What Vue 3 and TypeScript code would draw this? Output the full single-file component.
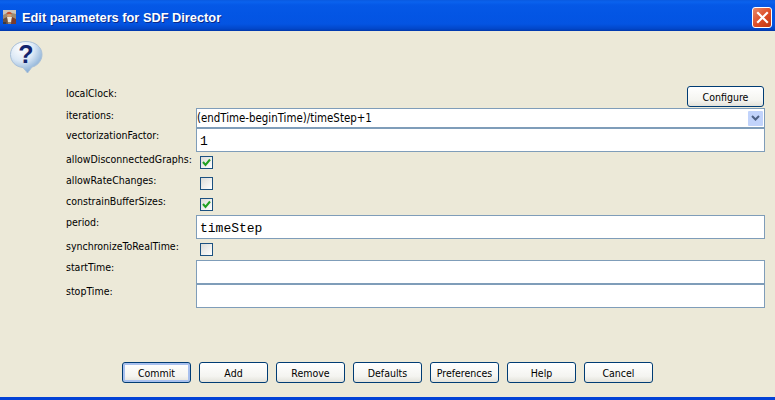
<template>
  <div class="dialog">
    <header class="titlebar">
      <svg class="titlebar__logo" width="13" height="14" viewBox="0 0 13 14">
        <rect width="13" height="14" fill="#a08a70" />
        <path d="M0 0 H13 V4 L9 3 L4 3 L0 5 Z" fill="#c9c4bc" />
        <path d="M3.5 4 C4 1 8 1 9 4 Z" fill="#c4502c" />
        <ellipse cx="6.3" cy="5.5" rx="2.3" ry="1.6" fill="#d8a070" />
        <path d="M4 7 L9 7 L8 12 L5 12 Z" fill="#eee8dc" />
        <path d="M0 9 L4 7 L5 14 L0 14 Z" fill="#6a5040" />
        <path d="M9 7 L13 9 L13 14 L8 14 Z" fill="#7a3c2c" />
        <rect x="0" y="12" width="3" height="2" fill="#3a3a46" />
      </svg>
      <span class="titlebar__text">Edit parameters for SDF Director</span>
      <button class="titlebar__close" aria-label="Close">
        <svg width="13" height="13" viewBox="0 0 13 13">
          <path d="M2 2 L11 11 M11 2 L2 11" stroke="#fff" stroke-width="2.2" stroke-linecap="square" fill="none" />
        </svg>
      </button>
    </header>

    <main class="body">
      <svg class="help-icon" width="33" height="33" viewBox="0 0 33 33">
        <defs>
          <radialGradient id="bubble" cx="35%" cy="22%" r="80%">
            <stop offset="0" stop-color="#ffffff" />
            <stop offset="0.5" stop-color="#dbe8f5" />
            <stop offset="1" stop-color="#7fa8d2" />
          </radialGradient>
        </defs>
        <path
          d="M16 0.5 C25 0.5 32 6 32 13.5 C32 20 27 25 22 26 L17.5 32 L13 26.5 C6 26 0.5 21 0.5 13.5 C0.5 6 7 0.5 16 0.5 Z"
          fill="url(#bubble)"
          stroke="#a9c0d8"
        />
        <text x="16" y="22" class="help-icon__mark">?</text>
      </svg>

      <div class="form">
        <div v-for="row in rows" :key="row.label" class="row" :class="`row--${row.kind}`">
          <label class="row__label">{{ row.label }}:</label>
          <div class="row__control">
            <button v-if="row.kind === 'button'" class="btn btn--configure">Configure</button>
            <div v-else-if="row.kind === 'combo'" class="combo">
              <span class="combo__text">{{ row.value }}</span>
              <span class="combo__arrow">
                <svg width="9" height="7" viewBox="0 0 9 7">
                  <path d="M1 1 L4.5 4.5 L8 1" stroke="#4d6185" stroke-width="2" fill="none" />
                </svg>
              </span>
            </div>
            <div v-else-if="row.kind === 'text'" class="field">{{ row.value }}</div>
            <span v-else class="checkbox">
              <svg v-if="row.checked" width="9" height="9" viewBox="0 0 9 9">
                <path d="M1 4 L3.5 7 L8 1.5" stroke="#21a121" stroke-width="2" fill="none" />
              </svg>
            </span>
          </div>
        </div>
      </div>

      <footer class="actions">
        <button
          v-for="name in actions"
          :key="name"
          class="btn"
          :class="{ 'btn--default': name === 'Commit' }"
        >{{ name }}</button>
      </footer>
    </main>
    <div class="taskbar-edge"></div>
  </div>
</template>

<script setup lang="ts">
interface Row {
  label: string
  kind: 'button' | 'combo' | 'text' | 'check'
  value?: string
  checked?: boolean
}

const rows: Row[] = [
  { label: 'localClock', kind: 'button' },
  { label: 'iterations', kind: 'combo', value: '(endTime-beginTime)/timeStep+1' },
  { label: 'vectorizationFactor', kind: 'text', value: '1' },
  { label: 'allowDisconnectedGraphs', kind: 'check', checked: true },
  { label: 'allowRateChanges', kind: 'check', checked: false },
  { label: 'constrainBufferSizes', kind: 'check', checked: true },
  { label: 'period', kind: 'text', value: 'timeStep' },
  { label: 'synchronizeToRealTime', kind: 'check', checked: false },
  { label: 'startTime', kind: 'text', value: '' },
  { label: 'stopTime', kind: 'text', value: '' },
]

const actions = ['Commit', 'Add', 'Remove', 'Defaults', 'Preferences', 'Help', 'Cancel']
</script>

<style>
body {
  overflow: hidden;
}
</style>

<style scoped>
.dialog {
  width: 775px;
  height: 400px;
  display: flex;
  flex-direction: column;
  background: #ece9d8;
  font-family: "DejaVu Sans", Tahoma, sans-serif;
  font-stretch: condensed;
  font-size: 10.5px;
  color: #000;
}

.titlebar {
  box-sizing: border-box;
  flex: 0 0 31px;
  display: flex;
  align-items: center;
  padding: 3px 3px 0;
  background: linear-gradient(#0a5ae0 0, #0a62ee 2px, #0558e6 5px, #0355e4 16px, #0454e2 24px, #0246c8 29px, #0036a8 31px);
}

.titlebar__logo {
  margin-right: 6px;
}

.titlebar__text {
  flex: 1;
  color: #fff;
  font-family: "Liberation Sans", Arial, sans-serif;
  font-stretch: normal;
  font-weight: 700;
  font-size: 12.8px;
  text-shadow: 1px 1px 0 #0a2a8a;
}

.titlebar__close {
  width: 20px;
  height: 21px;
  padding: 0;
  display: flex;
  align-items: center;
  justify-content: center;
  border: 1px solid #fff;
  border-radius: 3px;
  background: linear-gradient(135deg, #e88a6a, #dc4a24 55%, #c03812);
}

.body {
  flex: 1;
  display: flex;
  flex-direction: column;
  padding-top: 10px;
}

.help-icon {
  margin-left: 10px;
  flex: 0 0 33px;
}

.help-icon__mark {
  font-family: "Liberation Sans", sans-serif;
  font-weight: 700;
  font-size: 25px;
  fill: #12246e;
  text-anchor: middle;
}

.form {
  margin-top: 12px;
  padding: 0 10px 0 66px;
  display: flex;
  flex-direction: column;
}

.row {
  display: flex;
  align-items: flex-start;
}

.row--button {
  height: 22px;
}

.row--combo {
  height: 20px;
}

.row--text {
  height: 24px;
}

.row--check {
  height: 21px;
}

.row__label {
  flex: 0 0 130px;
  white-space: nowrap;
  padding-top: 1px;
}

.row__control {
  flex: 1;
  min-width: 0;
}

.row--button .row__control {
  display: flex;
  justify-content: flex-end;
}

.field,
.combo {
  box-sizing: border-box;
  border: 1px solid #7f9db9;
  background: #fff;
}

.field {
  height: 24px;
  padding: 4px 3px 0;
  font-family: "Liberation Mono", "Courier New", monospace;
  font-stretch: normal;
  font-size: 13px;
  line-height: 18px;
}

.combo {
  height: 20px;
  display: flex;
  align-items: center;
  justify-content: space-between;
  padding-right: 1px;
  font-size: 11.4px;
}

.combo__arrow {
  width: 15px;
  height: 15px;
  display: flex;
  align-items: center;
  justify-content: center;
  background: #c1d3fb;
  border-radius: 1px;
}

.checkbox {
  box-sizing: border-box;
  display: flex;
  align-items: center;
  justify-content: center;
  width: 13px;
  height: 13px;
  margin: 4px 0 0 4px;
  border: 1px solid #1c5180;
  background: linear-gradient(135deg, #dcdcd7, #fff);
}

.btn {
  box-sizing: border-box;
  width: 69px;
  height: 21px;
  padding: 0;
  border: 1px solid #003c74;
  border-radius: 3px;
  background: linear-gradient(#fff, #f4f4f0 70%, #e3e2da);
  font-family: inherit;
  font-stretch: condensed;
  font-size: 10.5px;
  color: #000;
}

.btn--configure {
  width: 77px;
  margin-right: 1px;
}

.btn--default {
  box-shadow: inset 0 0 0 2px #a8c0ee;
}

.actions {
  margin-top: auto;
  margin-bottom: 14px;
  display: flex;
  justify-content: center;
  gap: 8px;
}

.taskbar-edge {
  flex: 0 0 3px;
  background: #0342d6;
}
</style>
